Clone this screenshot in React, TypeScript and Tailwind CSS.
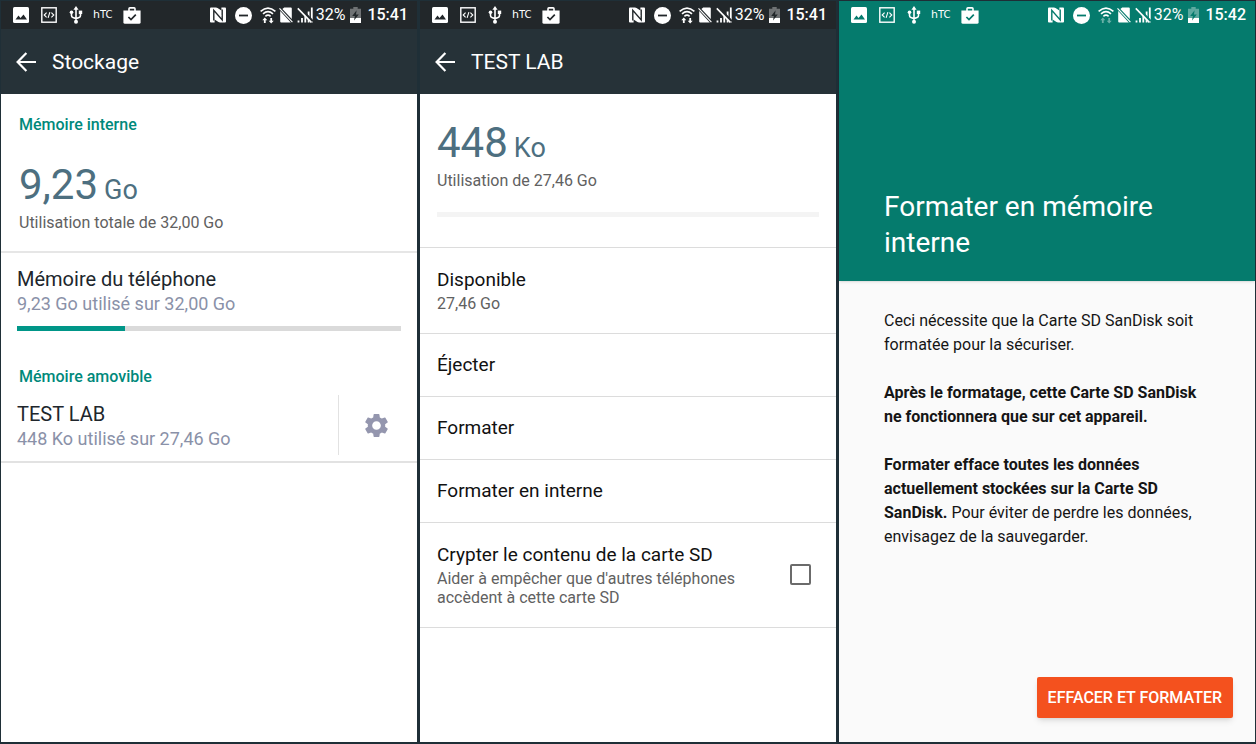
import { ReactNode } from 'react'
import clsx from 'clsx'
import { MdSettings } from 'react-icons/md'

function NotificationIcons({ bg }: { bg: string }) {
  return (
    <div className="flex items-center">
      <svg className="h-4 w-4" viewBox="0 0 16 16" aria-hidden="true">
        <rect width="16" height="16" rx="1.5" fill="#fff" />
        <path d="M2.5 12.5 5.5 8.5 7.5 11 10.5 7.5 14 12.5Z" fill={bg} />
      </svg>
      <svg className="ml-3 h-4 w-4" viewBox="0 0 16 16" fill="none" stroke="#fff" aria-hidden="true">
        <rect x=".8" y=".8" width="14.4" height="14.4" strokeWidth="1.4" />
        <path d="M5.6 5.6 3.2 8l2.4 2.4M10.4 5.6 12.8 8l-2.4 2.4M8.9 5.2 7.1 10.8" strokeWidth="1.1" />
      </svg>
      <svg className="ml-3 h-[18px] w-[14px]" viewBox="0 0 14 18" fill="none" stroke="#fff" strokeWidth="1.6" aria-hidden="true">
        <path d="M7 3v12M2.5 7v2.6q0 1.4 1.4 1.8L7 12.6l3.1-1.2q1.4-.4 1.4-1.8V7" />
        <path d="M7 0 9.6 3.8H4.4Z" fill="#fff" stroke="none" />
        <circle cx="2.5" cy="6.2" r="1.8" fill="#fff" stroke="none" />
        <rect x="9.8" y="4.6" width="3.4" height="3.4" fill="#fff" stroke="none" />
        <circle cx="7" cy="15.8" r="2" fill="#fff" stroke="none" />
      </svg>
      <span className="ml-2.5 w-[22px] font-['DejaVu_Sans'] text-[11px] leading-4">
        h<span className="text-[10px]">TC</span>
      </span>
      <svg className="ml-2 h-[17px] w-[18px]" viewBox="0 0 18 17" aria-hidden="true">
        <path d="M6 4V1.8q0-.9.9-.9h4.2q.9 0 .9.9V4" fill="none" stroke="#fff" strokeWidth="1.6" />
        <path d="M.4 3.6h17.2v11.6q0 1.6-1.6 1.6H2q-1.6 0-1.6-1.6Z" fill="#fff" />
        <path d="m5.4 10 2.6 2.6 4.8-5" fill="none" stroke={bg} strokeWidth="1.7" />
      </svg>
    </div>
  )
}

function SystemIcons({ bg, time, idle }: { bg: string; time: string; idle?: boolean }) {
  return (
    <div className="flex items-center">
      <svg className="h-4 w-4" viewBox="0 0 16 16" aria-hidden="true">
        <path d="M0 1.2Q0 .5 1 .5h14q1 0 1 .8v13.4q0 .8-1 .8H1q-1 0-1-.8Z" fill="#fff" />
        <path d="M6 0h5.4v3.4ZM4.6 12.6V16H10Z" fill={bg} />
        <path d="M3.8 13.6V3.4l8.4 9.6V2.4" fill="none" stroke={bg} strokeWidth="1.4" />
        <path d="m6.4 3.4 4.6 5.4M5 8l4.6 5.2" fill="none" stroke="#fff" strokeWidth="1" />
      </svg>
      <svg className="ml-[9px] h-[17px] w-[17px]" viewBox="0 0 17 17" aria-hidden="true">
        <circle cx="8.5" cy="8.5" r="8.5" fill="#fff" />
        <path d="M4 8.5h9" stroke={bg} strokeWidth="1.8" />
      </svg>
      <svg className="ml-2 h-[17px] w-4" viewBox="0 0 16 17" fill="none" stroke="#fff" strokeWidth="1.6" aria-hidden="true">
        <path d="M.6 4.4q7.4-6.6 14.8 0M3 6.9q5-4.4 10 0M5.4 9.3q2.6-2.2 5.2 0" />
        <g opacity={idle ? 0.4 : 1} fill="#fff" stroke="none">
          <path d="m4.8 10.4 2.5 2.9H5.7V16H3.9v-2.7H2.3Z" />
          <path d="m11.2 16.6-2.5-2.9h1.6V11h1.8v2.7h1.6Z" />
        </g>
      </svg>
      <svg className="ml-[3px] h-4 w-[14px]" viewBox="0 0 14 16" aria-hidden="true">
        <path d="M5.2.5h6.6q1 0 1 1v10.6L3.4 2ZM1.2 4 11.8 15.5H2.2q-1 0-1-1Z" fill="#fff" />
        <path d="M.5 1.4 13.4 15.2" stroke="#fff" strokeWidth="1.2" />
      </svg>
      <svg className="ml-1 h-4 w-4" viewBox="0 0 16 16" aria-hidden="true">
        <path d="M1.5 15.5v-2M5 15.5V11M8.3 15.5V8M11.6 15.5V4.4M14.8 15.5V.5" stroke="#fff" strokeWidth="1.8" />
        <path d="M1.5.5 15.5 14.6" stroke={bg} strokeWidth="3.4" />
        <path d="M.8 1.4 14.4 15.4" stroke="#fff" strokeWidth="1.6" />
      </svg>
      <span className="ml-[3px] text-base leading-6">32%</span>
      <svg className="ml-[5px] h-4 w-[11px]" viewBox="0 0 11 16" aria-hidden="true">
        <path d="M0 1.8h3.3V0h4.4v1.8H11V11H0Z" fill="#fff" opacity=".35" />
        <path d="M0 11h11v5H0Z" fill="#fff" />
        <path d="M6.6 3.2 2.2 9h2.7L4 13.4 8.8 7.6H6Z" fill={bg} />
      </svg>
      <span className="ml-1.5 text-base leading-6 font-medium">{time}</span>
    </div>
  )
}

function StatusBar({ bg, time, idle, className }: { bg: string; time: string; idle?: boolean; className: string }) {
  return (
    <div className={clsx('flex h-7 items-center justify-between pr-[9px] pl-3 text-white', className)}>
      <NotificationIcons bg={bg} />
      <SystemIcons bg={bg} time={time} idle={idle} />
    </div>
  )
}

function AppBar({ title }: { title: string }) {
  return (
    <header className="flex h-[65px] items-center gap-4 bg-[#263238] pl-[15px] text-white">
      <button type="button" aria-label="Retour">
        <svg className="h-5 w-5" viewBox="0 0 20 20" fill="none" stroke="#fff" strokeWidth="2.2" aria-hidden="true">
          <path d="M20 10H2M10.4 1 1.6 10l8.8 9" />
        </svg>
      </button>
      <h1 className="text-[21px] leading-7">{title}</h1>
    </header>
  )
}

function Screen({ children, className }: { children: ReactNode; className: string }) {
  return <section className={clsx('flex min-w-0 flex-col', className)}>{children}</section>
}

function Amount({ value, unit, note }: { value: string; unit: string; note: string }) {
  return (
    <>
      <p className="flex items-baseline gap-1.5 text-[42px] leading-12 text-[#4d6f80]">
        {value} <span className="text-[27px] leading-8">{unit}</span>
      </p>
      <p className="mt-0.5 text-base leading-6 text-[#616161]">{note}</p>
    </>
  )
}

function StorageScreen() {
  return (
    <Screen className="bg-white">
      <StatusBar bg="#22272a" time="15:41" className="bg-[#22272a]" />
      <AppBar title="Stockage" />
      <div className="border-b-2 border-[#e6e6e6] px-[18px] pt-[19px] pb-4">
        <h2 className="mb-6 text-base leading-6 font-medium text-[#00897b]">Mémoire interne</h2>
        <Amount value="9,23" unit="Go" note="Utilisation totale de 32,00 Go" />
      </div>
      <div className="px-4 pt-[13px]">
        <h3 className="text-xl leading-[26px] text-[#20262c]">Mémoire du téléphone</h3>
        <p className="text-[18px] leading-6 text-[#8a91a8]">9,23 Go utilisé sur 32,00 Go</p>
        <div className="mt-2.5 h-[5px] bg-[#dadada]">
          <div className="h-full w-[28%] bg-[#009688]" />
        </div>
      </div>
      <h2 className="mt-[34px] px-[18px] text-base leading-6 font-medium text-[#00897b]">Mémoire amovible</h2>
      <div className="flex border-b-2 border-[#e2e2e2] pt-1.5 pb-1.5">
        <div className="flex-1 pt-1.5 pl-4">
          <h3 className="text-xl leading-[26px] text-[#20262c]">TEST LAB</h3>
          <p className="text-[18px] leading-6 text-[#8a91a8]">448 Ko utilisé sur 27,46 Go</p>
        </div>
        <button
          type="button"
          aria-label="Paramètres"
          className="flex h-[60px] w-[79px] items-center justify-center border-l border-[#e2e2e2] pr-1 text-[#9496ae]"
        >
          <MdSettings className="h-[29px] w-[29px]" />
        </button>
      </div>
    </Screen>
  )
}

const actions = ['Éjecter', 'Formater', 'Formater en interne']

function CardScreen() {
  return (
    <Screen className="bg-white">
      <StatusBar bg="#22272a" time="15:41" className="bg-[#22272a]" />
      <AppBar title="TEST LAB" />
      <div className="border-b border-[#dcdcdc] px-[17px] pt-[25px] pb-[30px]">
        <Amount value="448" unit="Ko" note="Utilisation de 27,46 Go" />
        <div className="mt-[19px] h-[5px] bg-[#f4f4f4]" />
      </div>
      <div className="border-b border-[#dcdcdc] px-[17px] pt-[18px] pb-5">
        <h3 className="text-[19px] leading-7 text-[#111]">Disponible</h3>
        <p className="text-base leading-[19px] text-[#616161]">27,46 Go</p>
      </div>
      {actions.map((action) => (
        <button
          key={action}
          type="button"
          className="h-[63px] border-b border-[#dcdcdc] px-[17px] text-left text-[19px] leading-7 text-[#111]"
        >
          {action}
        </button>
      ))}
      <label htmlFor="encrypt" className="flex items-center justify-between border-b border-[#dcdcdc] pt-[18px] pr-[25px] pb-5 pl-[17px]">
        <span className="w-[320px]">
          <span className="block text-[19px] leading-7 text-[#111]">Crypter le contenu de la carte SD</span>
          <span className="block text-base leading-[19px] text-[#616161]">
            Aider à empêcher que d'autres téléphones accèdent à cette carte SD
          </span>
        </span>
        <input id="encrypt" type="checkbox" className="h-[21px] w-[21px] appearance-none rounded-xs border-2 border-[#6b6b6b]" />
      </label>
    </Screen>
  )
}

function FormatScreen() {
  return (
    <Screen className="bg-[#fafafa]">
      <header className="bg-[#057b6d] pb-5 text-white shadow-sm">
        <StatusBar bg="#057b6d" time="15:42" idle className="bg-[#057b6d]" />
        <h1 className="mt-40 px-[45px] text-[28px] leading-9">Formater en mémoire interne</h1>
      </header>
      <div className="flex flex-1 flex-col gap-6 px-[45px] pt-7 text-base leading-6 text-[#151515]">
        <p>Ceci nécessite que la Carte SD SanDisk soit formatée pour la sécuriser.</p>
        <p className="font-bold">Après le formatage, cette Carte SD SanDisk ne fonctionnera que sur cet appareil.</p>
        <p>
          <b>Formater efface toutes les données actuellement stockées sur la Carte SD SanDisk.</b> Pour éviter de perdre les
          données, envisagez de la sauvegarder.
        </p>
      </div>
      <div className="flex justify-end pr-[22px] pb-6">
        <button
          type="button"
          className="h-[41px] rounded-xs bg-[#f4511e] px-[11px] text-base leading-6 font-medium text-white shadow-md"
        >
          EFFACER ET FORMATER
        </button>
      </div>
    </Screen>
  )
}

export default function App() {
  return (
    <main className="grid min-h-screen grid-cols-3 gap-[3px] bg-[#1f2f37] px-px pt-px pb-0.5 font-[Roboto,sans-serif]">
      <StorageScreen />
      <CardScreen />
      <FormatScreen />
    </main>
  )
}
